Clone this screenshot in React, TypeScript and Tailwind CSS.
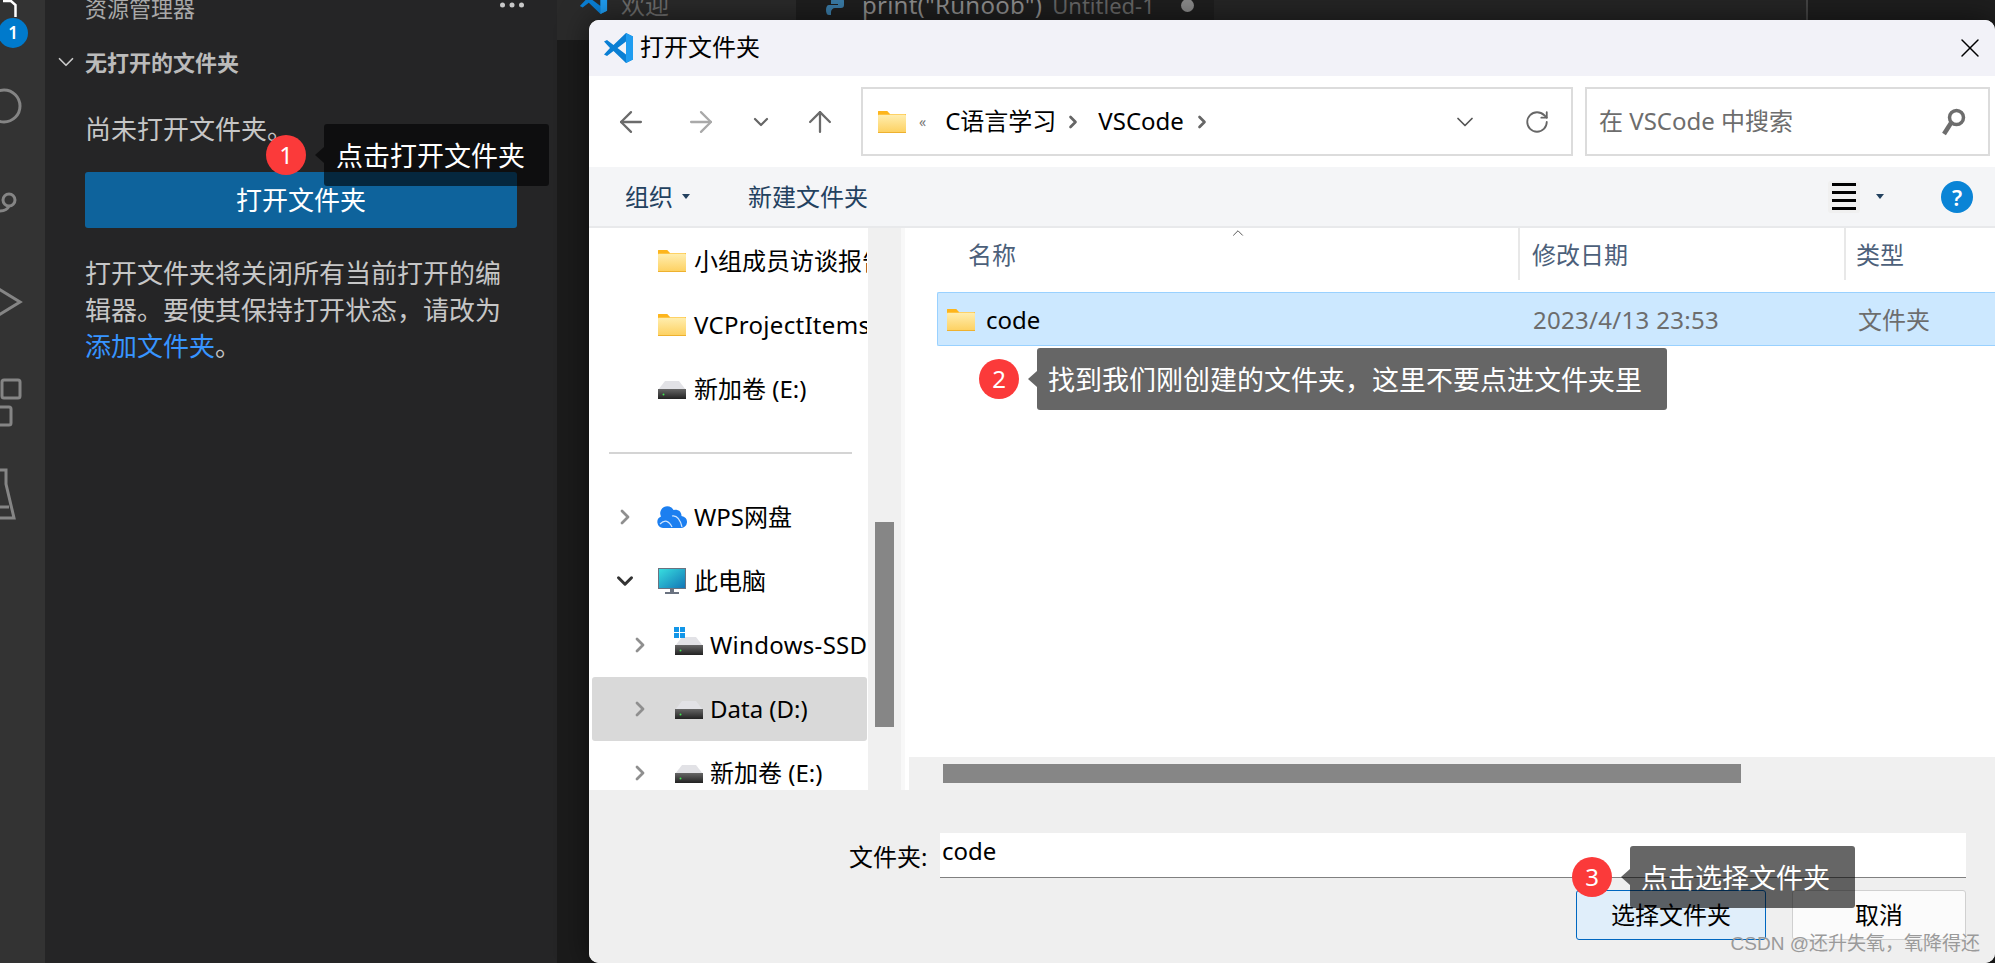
import { ArrowLeft, ArrowRight, ArrowUp, ChevronDown, ChevronRight, ChevronUp, RotateCw, X } from "lucide-react";

const sans = "[font-family:'Noto_Sans','Noto_Sans_CJK_SC',sans-serif]";

function VsCodeLogo({ className }: { className?: string }) {
    return (
        <svg viewBox="0 0 32 32" className={className}>
            <path fillRule="evenodd" fill="#0a7fd4" d="M24 1 11.5 13 5 8 2 9.5 8 16l-6 6.5L5 24l6.5-5L24 31l7-3.5v-23ZM24 9.5v13L15.5 16Z" />
            <path fill="#1f9cf0" d="M24 1l7 3.5v23L24 31Z" />
        </svg>
    );
}

function FolderIcon() {
    return (
        <svg width="28" height="22" viewBox="0 0 28 22" className="shrink-0">
            <defs>
                <linearGradient id="folderBody" x1="0" y1="0" x2="0" y2="1">
                    <stop offset="0" stopColor="#ffeeb0" />
                    <stop offset="1" stopColor="#fdd05f" />
                </linearGradient>
            </defs>
            <path fill="#fdb51c" d="M0 1a1 1 0 0 1 1-1h8l3 3h16v4H0Z" />
            <rect x="0" y="3.5" width="28" height="18.5" rx="1" fill="url(#folderBody)" />
            <path fill="#fdb51c" d="M0 1a1 1 0 0 1 1-1h8l3 3.5H0Z" />
            <rect x="0" y="21" width="28" height="1" fill="#eeb12f" />
        </svg>
    );
}

function DriveIcon({ windows }: { windows?: boolean }) {
    return (
        <svg width="28" height="28" viewBox="0 0 28 28" className="shrink-0 overflow-visible">
            <defs>
                <linearGradient id="driveBody" x1="0" y1="0" x2="0" y2="1">
                    <stop offset="0" stopColor="#666" />
                    <stop offset="1" stopColor="#222" />
                </linearGradient>
            </defs>
            <path fill="#e2e2e6" d="M7 6h14l7 9H0Z" />
            <rect x="0" y="14" width="28" height="10" fill="url(#driveBody)" />
            <circle cx="5.5" cy="19.5" r="1" fill="#3fe04f" />
            {windows && (
                <g fill="#1296e8">
                    <rect x="-1" y="-4" width="5" height="5" />
                    <rect x="5" y="-4" width="5" height="5" />
                    <rect x="-1" y="2" width="5" height="5" />
                    <rect x="5" y="2" width="5" height="5" />
                </g>
            )}
        </svg>
    );
}

function CloudIcon() {
    return (
        <svg width="30" height="22" viewBox="0 0 30 22" className="shrink-0">
            <path fill="#1c7ff0" d="M6 22a6 6 0 0 1-2-11.500A7 7 0 0 1 16.500 4a6 6 0 0 1 8 6 6 6 0 0 1-1 12Z" />
            <path fill="none" stroke="#cfe6ff" strokeWidth="1.200" d="M3 18c5-5 9-3 12 3M15 10c5-1 8 3 10 11" />
        </svg>
    );
}

function MonitorIcon() {
    return (
        <svg width="28" height="28" viewBox="0 0 28 28" className="shrink-0">
            <defs>
                <linearGradient id="screen" x1="0" y1="0" x2="1" y2="1">
                    <stop offset="0" stopColor="#38e0e0" />
                    <stop offset="1" stopColor="#1273b5" />
                </linearGradient>
            </defs>
            <rect x="0.500" y="1.500" width="27" height="20" fill="url(#screen)" stroke="#6a7280" />
            <rect x="12" y="22" width="4" height="3" fill="#6a7280" />
            <rect x="7" y="25" width="14" height="2" fill="#6a7280" />
        </svg>
    );
}

type TreeRow = {
    label: string;
    icon: React.ReactNode;
    depth?: 0 | 1;
    chevron?: "right" | "down";
    selected?: boolean;
    wide?: boolean;
};

const upperRows: TreeRow[] = [
    { label: "小组成员访谈报告", icon: <FolderIcon /> },
    { label: "VCProjectItems", icon: <FolderIcon />, wide: true },
    { label: "新加卷 (E:)", icon: <DriveIcon /> },
];

const lowerRows: TreeRow[] = [
    { label: "WPS网盘", icon: <CloudIcon />, chevron: "right" },
    { label: "此电脑", icon: <MonitorIcon />, chevron: "down" },
    { label: "Windows-SSD (C:)", icon: <DriveIcon windows />, chevron: "right", depth: 1, wide: true },
    { label: "Data (D:)", icon: <DriveIcon />, chevron: "right", depth: 1, selected: true },
    { label: "新加卷 (E:)", icon: <DriveIcon />, chevron: "right", depth: 1 },
];

function NavRow({ row }: { row: TreeRow }) {
    return (
        <div
            className={`ml-[3px] mr-px flex h-[64px] items-center overflow-hidden rounded-[3px] whitespace-nowrap ${
                row.depth === 1 ? "pl-[33px]" : "pl-[18px]"
            } ${row.selected ? "bg-[#d9d9d9]" : ""}`}
        >
            <span className={`flex w-[30px] shrink-0 justify-center ${row.depth === 1 ? "mr-[20px]" : "mr-[18px]"}`}>
                {row.chevron === "right" && <ChevronRight size={24} strokeWidth={2.8} className="text-[#8f8f8f]" />}
                {row.chevron === "down" && <ChevronDown size={26} strokeWidth={2.8} className="text-[#333]" />}
            </span>
            <span className="flex w-[28px] shrink-0 items-center justify-center">{row.icon}</span>
            <span
                className={`text-[24px] leading-none text-black ${row.depth === 1 ? "ml-[7px]" : "ml-[8px]"} ${
                    row.wide ? "tracking-[0.3px]" : ""
                }`}
            >
                {row.label}
            </span>
        </div>
    );
}

function Callout({
    n,
    text,
    className,
    bubbleClass,
}: {
    n: number;
    text: string;
    className: string;
    bubbleClass: string;
}) {
    return (
        <div className={`absolute flex h-[62px] items-center ${className}`}>
            <div className="absolute top-[11px] flex size-[40px] items-center justify-center rounded-full bg-[#fb3a3a] text-[24px] text-white [left:-58px]">
                {n}
            </div>
            <div className="absolute top-[23px] left-[-9px] border-y-[8px] border-r-[9px] border-y-transparent border-r-black/60" />
            <div className={`flex h-full items-center rounded-[3px] bg-black/60 text-[27px] leading-none whitespace-nowrap text-white ${bubbleClass}`}>
                {text}
            </div>
        </div>
    );
}

function ActivityBar() {
    return (
        <div className="relative w-[45px] shrink-0 overflow-hidden bg-[#333333]">
            <svg viewBox="0 0 45 57" className="block h-[57px] w-[45px]">
                <path d="M3 1h8l4.500 4v12" fill="none" stroke="#fff" strokeWidth="2.500" />
            </svg>
            <div className="absolute top-[18px] left-[-2px] flex size-[30px] items-center justify-center rounded-full bg-[#007acc] text-[17px] font-semibold text-white">
                1
            </div>
            <svg viewBox="0 0 45 98" className="block h-[98px] w-[45px] fill-none stroke-[#858585] stroke-[3]">
                <circle cx="4" cy="49" r="16" />
            </svg>
            <svg viewBox="0 0 45 98" className="block h-[98px] w-[45px] fill-none stroke-[#858585] stroke-[3]">
                <circle cx="9" cy="45" r="6" />
                <path d="M9 51q-2 5-10 5" />
            </svg>
            <svg viewBox="0 0 45 98" className="block h-[98px] w-[45px] fill-none stroke-[#858585] stroke-[3]">
                <path d="M-3 35 20 49-3 63" />
            </svg>
            <svg viewBox="0 0 45 98" className="block h-[98px] w-[45px] fill-none stroke-[#858585] stroke-[3]">
                <rect x="2" y="29" width="18" height="18" rx="2" />
                <rect x="-8" y="56" width="19" height="18" rx="2" />
            </svg>
            <svg viewBox="0 0 45 98" className="block h-[98px] w-[45px] fill-none stroke-[#858585] stroke-[3]">
                <path d="M-3 21h9v14l8 34H-3M-3 58h12" />
            </svg>
        </div>
    );
}

function SideBar() {
    return (
        <div className="flex w-[512px] shrink-0 flex-col bg-[#252526] pr-[40px] pl-[40px] text-[26px] text-[#c6c6c6]">
            <div className="flex h-[16px] items-center justify-between text-[22px] leading-none text-[#a9a9a9]">
                <span>资源管理器</span>
                <svg width="24" height="6" viewBox="0 0 24 6" className="mr-[-7px] mb-[6px] fill-[#c8c8c8]">
                    <circle cx="2.500" cy="3" r="2.500" />
                    <circle cx="12" cy="3" r="2.500" />
                    <circle cx="21.500" cy="3" r="2.500" />
                </svg>
            </div>
            <div className="mt-[30px] flex h-[32px] items-center text-[22px] font-bold text-[#bbbbbb]">
                <ChevronDown size={26} strokeWidth={1.6} className="ml-[-32px] mr-[6px] text-[#c8c8c8]" />
                无打开的文件夹
            </div>
            <p className="mt-[33px] h-[36px] leading-[36px]">尚未打开文件夹。</p>
            <button className="mt-[25px] flex h-[56px] items-center justify-center rounded-[3px] bg-[#0e639c] text-white">
                打开文件夹
            </button>
            <p className="mt-[27px] leading-[36.500px]">
                打开文件夹将关闭所有当前打开的编辑器。要使其保持打开状态，请改为
                <br />
                <span className="text-[#3794ff]">添加文件夹</span>。
            </p>
        </div>
    );
}

function EditorArea() {
    return (
        <div className="flex min-w-0 flex-1 flex-col bg-[#1b1b1b]">
            <div className="flex h-[40px] items-start overflow-hidden bg-[#2a2a2a] text-[24px] leading-[24px]">
                <div className="flex w-[239px] shrink-0 pl-[21px]">
                    <VsCodeLogo className="mt-[-15px] size-[30px] shrink-0" />
                    <span className="mt-[-7px] ml-[13px] text-[#6d6d6d]">欢迎</span>
                </div>
                <div className="flex h-full w-[418px] shrink-0 bg-[#1e1e1e] pl-[30px]">
                    <svg width="22" height="20" viewBox="0 0 22 20" className="mt-[-3px] shrink-0">
                        <path fill="#3a7ca8" d="M11 0C6 0 5 2 5 4v3h7v1H3C1 8 0 10 0 13s1 5 3 5h2v-3c0-2 2-4 4-4h6c2 0 3-1 3-3V4c0-2-2-4-7-4z" />
                    </svg>
                    <span className="mt-[-7px] ml-[14px] whitespace-nowrap tracking-[0.25px] text-[#8d8d8d]">print("Runoob")</span>
                    <span className="mt-[-7px] ml-[10px] whitespace-nowrap text-[22px] text-[#666]">Untitled-1</span>
                    <span className="mt-[-1px] ml-auto mr-[20px] size-[13px] rounded-full bg-[#8a8a8a]" />
                </div>
                <div className="flex h-full flex-1 bg-[#252525]">
                    <div className="ml-auto h-full w-[189px] border-l-2 border-[#444] bg-[#1e1e1e]" />
                </div>
            </div>
            <div className="flex-1" />
        </div>
    );
}

function TitleBar() {
    return (
        <div className="flex h-[56px] shrink-0 items-center bg-[#f2f2f8] pl-[13px]">
            <VsCodeLogo className="size-[32px]" />
            <span className="mb-[2px] ml-[6px] text-[24px] leading-none text-black">打开文件夹</span>
            <X size={32} strokeWidth={1.1} className="ml-auto mr-[9px] text-black" />
        </div>
    );
}

function AddressRow() {
    return (
        <div className="flex h-[91px] shrink-0 items-center bg-white">
            <ArrowLeft size={34} strokeWidth={1.6} className="ml-[25px] text-[#6b6b6b]" />
            <ArrowRight size={34} strokeWidth={1.6} className="ml-[36px] text-[#a9a9a9]" />
            <ChevronDown size={24} strokeWidth={2.2} className="ml-[31px] text-[#666]" />
            <ArrowUp size={34} strokeWidth={1.6} className="ml-[30px] text-[#6b6b6b]" />
            <div className="ml-[24px] flex h-[69px] w-[712px] items-center border-2 border-[#dcdcdc] pl-[15px] text-[24px] leading-none text-black">
                <FolderIcon />
                <span className="ml-[13px] text-[14px] text-[#777]">«</span>
                <span className="mb-[2px] ml-[19px]">C语言学习</span>
                <ChevronRight size={20} strokeWidth={3.2} className="ml-[7px] text-[#666]" />
                <span className="mb-[2px] ml-[15px]">VSCode</span>
                <ChevronRight size={20} strokeWidth={3.2} className="ml-[8px] text-[#666]" />
                <ChevronDown size={28} strokeWidth={1.5} className="ml-auto text-[#555]" />
                <RotateCw size={26} strokeWidth={1.7} className="ml-[45px] mr-[21px] text-[#666]" />
            </div>
            <div className="ml-[12px] flex h-[69px] w-[405px] items-center border-2 border-[#dcdcdc] pl-[12px] text-[24px] leading-none text-[#6d6d6d]">
                <span className="mb-[2px]">在 VSCode 中搜索</span>
                <svg width="24" height="30" viewBox="0 0 24 30" className="ml-auto mr-[22px]">
                    <circle cx="14.500" cy="10.500" r="7" fill="none" stroke="#6d6d6d" strokeWidth="3.500" />
                    <path d="M9 16 2 27" stroke="#6d6d6d" strokeWidth="4.500" />
                </svg>
            </div>
        </div>
    );
}

function ToolRow() {
    return (
        <div className="flex h-[61px] shrink-0 items-center border-b-2 border-[#e8e9eb] bg-[#f4f5f7] pl-[36px] text-[24px] leading-none text-[#23415f]">
            <span>组织</span>
            <span className="ml-[9px] border-x-[4px] border-t-[5px] border-x-transparent border-t-[#23415f]" />
            <span className="ml-[58px]">新建文件夹</span>
            <div className="ml-auto flex size-[32px] flex-col items-center justify-center gap-[5px] rounded-[3px] bg-[#f0f0f0]">
                <span className="h-[3px] w-[24px] bg-black" />
                <span className="h-[3px] w-[24px] bg-black" />
                <span className="h-[3px] w-[24px] bg-black" />
                <span className="h-[3px] w-[24px] bg-black" />
            </div>
            <span className="ml-[16px] border-x-[4px] border-t-[5px] border-x-transparent border-t-[#23415f]" />
            <div className="mr-[22px] ml-[57px] flex size-[32px] items-center justify-center rounded-full bg-[#0a84d6] text-[22px] font-semibold text-white">
                ?
            </div>
        </div>
    );
}

function FileList() {
    return (
        <div className="flex min-w-0 flex-1 flex-col">
            <div className="relative flex h-[52px] shrink-0 items-center text-[24px] leading-none text-[#4c607a]">
                <ChevronUp size={18} strokeWidth={1.3} className="absolute top-[-4px] left-[324px] text-[#555]" />
                <div className="flex h-full w-[615px] shrink-0 items-center border-r-2 border-[#e8e8e8] pt-[2px] pl-[63px]">名称</div>
                <div className="flex h-full w-[326px] shrink-0 items-center border-r-2 border-[#e8e8e8] pt-[2px] pl-[12px]">修改日期</div>
                <div className="pt-[2px] pl-[10px]">类型</div>
            </div>
            <div className="mt-[12px] ml-[32px] flex h-[54px] shrink-0 items-center rounded-l-[2px] border border-r-0 border-[#99d1ff] bg-[#cce8ff] pt-[2px] text-[24px] leading-none">
                <div className="flex w-[583px] shrink-0 items-center pl-[9px]">
                    <FolderIcon />
                    <span className="ml-[11px] text-black">code</span>
                </div>
                <div className="w-[326px] shrink-0 pl-[12px] tracking-[0.3px] text-[#6d6d6d]">2023/4/13 23:53</div>
                <div className="pl-[11px] text-[#6d6d6d]">文件夹</div>
            </div>
            <div className="flex-1" />
            <div className="ml-[4px] flex h-[33px] shrink-0 items-center bg-[#f0f0f0] pl-[34px]">
                <div className="h-[19px] w-[798px] bg-[#868686]" />
            </div>
        </div>
    );
}

function FolderDialog() {
    return (
        <div className="absolute top-[20px] left-[589px] flex h-[943px] w-[1406px] flex-col overflow-hidden rounded-[10px] bg-white shadow-[0_0_30px_rgba(0,0,0,0.55)]">
            <TitleBar />
            <AddressRow />
            <ToolRow />
            <div className="flex h-[562px] shrink-0">
                <div className="w-[279px] shrink-0 overflow-hidden pt-px">
                    {upperRows.map((row) => (
                        <NavRow key={row.label} row={row} />
                    ))}
                    <div className="flex h-[64px] items-center pl-[20px]">
                        <div className="h-[2px] w-[243px] bg-[#d4d4d4]" />
                    </div>
                    {lowerRows.map((row) => (
                        <NavRow key={row.label} row={row} />
                    ))}
                </div>
                <div className="w-[33px] shrink-0 bg-[#f0f0f0] pt-[294px] pl-[7px]">
                    <div className="h-[205px] w-[19px] bg-[#868686]" />
                </div>
                <div className="w-[4px] shrink-0 bg-[#f8f8f8]" />
                <FileList />
            </div>
            <div className="h-[173px] shrink-0 bg-[#efefef] pr-[29px] text-[24px] leading-none text-black">
                <div className="flex pt-[43px]">
                    <span className="mt-[12px] ml-[260px] w-[91px]">文件夹:</span>
                    <input
                        readOnly
                        value="code"
                        className="h-[45px] flex-1 border-b border-[#808080] bg-white pb-[9px] pl-[2px] text-black outline-none"
                    />
                </div>
                <div className="mt-[12px] flex justify-end gap-[26px]">
                    <button className="h-[50px] w-[190px] rounded-[3px] border border-[#0067c0] bg-[#e0eefa]">选择文件夹</button>
                    <button className="h-[50px] w-[174px] rounded-[3px] border border-[#d0d0d0] bg-[#fbfbfb]">取消</button>
                </div>
            </div>
        </div>
    );
}

export default function App() {
    return (
        <div className={`relative flex h-[963px] w-[1995px] overflow-hidden bg-[#1b1b1b] ${sans}`}>
            <ActivityBar />
            <SideBar />
            <EditorArea />
            <FolderDialog />
            <Callout n={1} text="点击打开文件夹" className="top-[124px] left-[324px]" bubbleClass="w-[225px] pl-[12px]" />
            <Callout n={2} text="找到我们刚创建的文件夹，这里不要点进文件夹里" className="top-[348px] left-[1037px]" bubbleClass="w-[630px] pl-[11px]" />
            <Callout n={3} text="点击选择文件夹" className="top-[846px] left-[1630px]" bubbleClass="w-[225px] pl-[11px]" />
            <div className="absolute top-[932px] right-[15px] text-[19px] leading-[24px] whitespace-nowrap text-[#9a9a9a] [font-family:'Liberation_Sans','Noto_Sans_CJK_SC',sans-serif]">
                CSDN @还升失氧，氧降得还
            </div>
        </div>
    );
}
